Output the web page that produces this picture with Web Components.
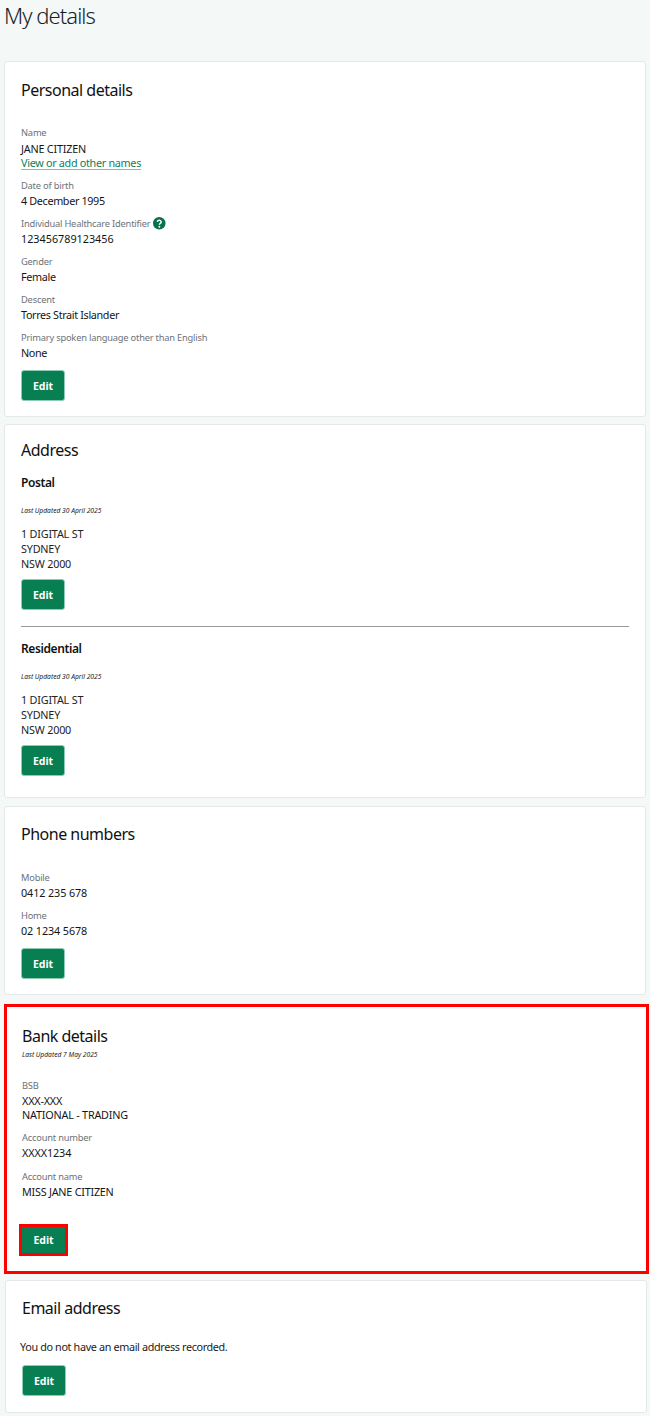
<!DOCTYPE html>
<html lang="en"><head><meta charset="utf-8"><title>My details</title>
<style>
html,body{margin:0;padding:0;background:#f4f8f7}
body{font-family:"Noto Sans","Open Sans",sans-serif;color:#111;width:650px;height:1416px;overflow:hidden}
</style></head><body>
<my-page>
<h-title slot="title">My details</h-title>
<my-card style="height:356px;--pt:16px">
 <card-title>Personal details</card-title>
 <my-field style="margin-top:22px;--ls:-.2px;--vm:2px" label="Name">JANE CITIZEN<br><my-link>View or add other names</my-link></my-field>
 <my-field label="Date of birth">4 December 1995</my-field>
 <my-field style="--ls:0" label="Individual Healthcare Identifier" help>123456789123456</my-field>
 <my-field label="Gender">Female</my-field>
 <my-field label="Descent">Torres Strait Islander</my-field>
 <my-field label="Primary spoken language other than English">None</my-field>
 <my-button style="margin-top:10px">Edit</my-button>
</my-card>
<my-card style="height:374px;margin-top:7px;--pt:13px">
 <card-title>Address</card-title>
 <sub-title style="margin-top:11px">Postal</sub-title>
 <last-updated style="margin-top:14px">Last Updated 30 April 2025</last-updated>
 <my-lines style="margin-top:10px">1 DIGITAL ST<br>SYDNEY<br>NSW 2000</my-lines>
 <my-button style="margin-top:8px">Edit</my-button>
 <my-rule></my-rule>
 <sub-title style="margin-top:13px">Residential</sub-title>
 <last-updated style="margin-top:14px">Last Updated 30 April 2025</last-updated>
 <my-lines style="margin-top:10px">1 DIGITAL ST<br>SYDNEY<br>NSW 2000</my-lines>
 <my-button style="margin-top:8px">Edit</my-button>
</my-card>
<my-card style="height:189px;margin-top:8px;--pt:15px">
 <card-title>Phone numbers</card-title>
 <my-field style="margin-top:23px;--ls:-.1px" label="Mobile">0412 235 678</my-field>
 <my-field style="--ls:-.1px" label="Home">02 1234 5678</my-field>
 <my-button style="margin-top:10px">Edit</my-button>
</my-card>
<my-card highlight style="height:270px;margin-top:9px;--pt:17px">
 <card-title>Bank details</card-title>
 <last-updated style="margin-top:1px">Last Updated 7 May 2025</last-updated>
 <my-field style="margin-top:18px;--ls:-.2px" label="BSB">XXX-XXX<br>NATIONAL - TRADING</my-field>
 <my-field style="margin-top:8px;--ls:-.1px" label="Account number">XXXX1234</my-field>
 <my-field style="--ls:-.23px;margin-top:9px" label="Account name">MISS JANE CITIZEN</my-field>
 <my-button highlight style="margin-top:25px">Edit</my-button>
</my-card>
<my-card style="height:133px;margin:6px -1px 0 1px;--pt:15px">
 <card-title>Email address</card-title>
 <my-lines style="margin:18px 0 0 -2px;letter-spacing:-.35px">You do not have an email address recorded.</my-lines>
 <my-button style="margin-top:11px">Edit</my-button>
</my-card>
</my-page>
<script>
function def(name,css,html){
 customElements.define(name,class extends HTMLElement{
  connectedCallback(){
   if(this.shadowRoot)return;
   const r=this.attachShadow({mode:'open'});
   r.innerHTML='<style>'+css+'</style>'+(typeof html==='function'?html(this):html);
  }
 });
}
def('my-page',':host{display:block;padding:0 4px}','<slot name="title"></slot><slot></slot>');
def('h-title',':host{display:block;height:61px;font-size:22px;line-height:30px;font-weight:300;letter-spacing:-.95px;color:#16232c}','<slot></slot>');
def('my-card',`:host{display:block;box-sizing:border-box;background:#fff;border:1px solid #e4e8e7;border-radius:3px;padding:var(--pt,16px) 16px 16px}
:host([highlight]){border:3px solid #f00;border-radius:0;margin-right:-3px;padding:var(--pt,16px) 15px 16px}`,'<slot></slot>');
def('card-title',':host{display:block;font-size:16px;line-height:25px;letter-spacing:-.5px;color:#111}','<slot></slot>');
def('sub-title',':host{display:block;font-size:12px;line-height:18px;font-weight:600;letter-spacing:-.4px;color:#111}','<slot></slot>');
def('last-updated',':host{display:block;font-size:6.7px;line-height:10px;font-style:italic;color:#222}','<slot></slot>');
def('my-lines',':host{display:block;font-size:10.8px;line-height:15px;letter-spacing:-.2px;color:#222}','<slot></slot>');
def('my-rule',':host{display:block;height:1px;background:#999;margin-top:16px}','');
def('my-link',':host{color:#0f8059;text-decoration:underline;text-decoration-color:#7fbfa6;text-underline-offset:2px;letter-spacing:-.3px}','<slot></slot>');
def('my-field',`:host{display:block;margin-top:8px}
.l{font-size:9.3px;line-height:15px;letter-spacing:-.2px;color:#6d7278;display:flex;align-items:center;gap:3px}
.v{font-size:10.8px;line-height:14px;margin-top:var(--vm,1px);letter-spacing:var(--ls,-.35px);color:#151515}
svg{width:12.5px;height:12.5px;display:block}`,
 el=>'<div class="l"><span>'+el.getAttribute('label')+'</span>'+(el.hasAttribute('help')?'<svg viewBox="0 0 24 24"><circle cx="12" cy="12" r="12" fill="#06734c"/><path d="M8.2 9.4a3.9 3.9 0 0 1 7.7.3c0 2.6-3.7 2.6-3.7 5" fill="none" stroke="#fff" stroke-width="2.8"/><circle cx="12.2" cy="18.6" r="1.8" fill="#fff"/></svg>':'')+'</div><div class="v"><slot></slot></div>');
def('my-button',`:host{display:block;width:fit-content}
.b{box-sizing:border-box;width:44px;height:31px;background:#077f52;color:#fff;border:1px solid #8fcbb2;border-radius:3px;display:flex;align-items:center;justify-content:center;font-size:10.5px;font-weight:700;letter-spacing:-.1px}
:host([highlight]) .b{border:3px solid #f00;border-radius:0;width:49px;height:32px;margin-left:-3px}`,'<div class="b"><slot></slot></div>');
</script>
</body></html>
